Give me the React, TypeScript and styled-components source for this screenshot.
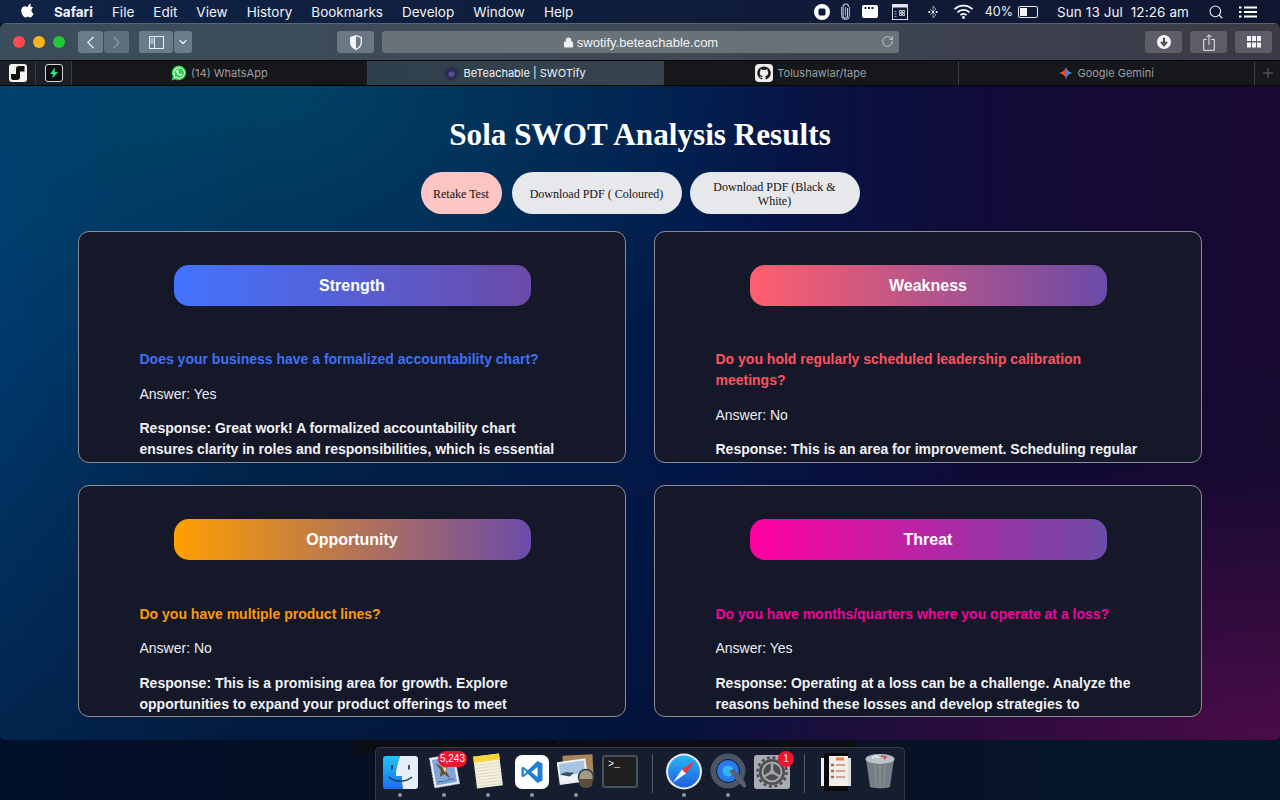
import React from "react";
import styled, { createGlobalStyle } from "styled-components";
import { Search, Lock, RotateCw, Plus, ChevronLeft, ChevronRight, ChevronDown } from "lucide-react";

const GlobalStyle = createGlobalStyle`
  html, body { margin: 0; padding: 0; height: 100%; background: #050d20; overflow: hidden; }
  * { box-sizing: border-box; }
`;

const cards = [
  {
    title: "Strength", from: "#4274ff", color: "#4070f4",
    question: "Does your business have a formalized accountability chart?",
    answer: "Answer: Yes",
    response: "Response: Great work! A formalized accountability chart ensures clarity in roles and responsibilities, which is essential for sustainable growth.",
  },
  {
    title: "Weakness", from: "#ff5f6d", color: "#ff5260",
    question: "Do you hold regularly scheduled leadership calibration meetings?",
    answer: "Answer: No",
    response: "Response: This is an area for improvement. Scheduling regular calibration meetings keeps your team aligned.",
  },
  {
    title: "Opportunity", from: "#ff9f00", color: "#fb9a05",
    question: "Do you have multiple product lines?",
    answer: "Answer: No",
    response: "Response: This is a promising area for growth. Explore opportunities to expand your product offerings to meet customer needs.",
  },
  {
    title: "Threat", from: "#ff00a0", color: "#f0049a",
    question: "Do you have months/quarters where you operate at a loss?",
    answer: "Answer: Yes",
    response: "Response: Operating at a loss can be a challenge. Analyze the reasons behind these losses and develop strategies to overcome them.",
  },
];

const App = () => {
  return (
    <Desktop>
      <GlobalStyle />
      <MenuBar>
        <MenuLeft>
          <AppleIcon viewBox="0 0 170 170">
            <path fill="#fff" d="M150 130c-2.700 6.300-5.900 12-9.600 17.200-5 7.200-9.200 12.100-12.300 14.900-4.900 4.500-10.200 6.800-15.800 7-4 0-8.900-1.200-14.500-3.500-5.700-2.300-10.900-3.400-15.700-3.400-5 0-10.400 1.100-16.100 3.400-5.800 2.300-10.400 3.600-14 3.700-5.400 0.200-10.800-2.100-16.200-7.100-3.400-3-7.700-8.100-12.800-15.400C16.500 138.500 12 129.500 8.500 119.300 4.700 108.300 2.800 97.600 2.800 87.300c0-11.800 2.500-22 7.600-30.500 4-6.800 9.400-12.200 16-16.200 6.700-4 13.900-6 21.600-6.100 4.300 0 9.900 1.300 16.800 3.900 6.900 2.600 11.400 3.900 13.300 3.900 1.500 0 6.400-1.500 14.800-4.600 7.900-2.800 14.600-4 20.100-3.600 14.900 1.200 26 7.100 33.400 17.600-13.300 8.100-19.900 19.400-19.800 33.900 0.100 11.300 4.200 20.700 12.300 28.100 3.700 3.500 7.800 6.200 12.400 8.100-1 2.900-2 5.700-3.300 8.500zM119.100 7.200c0 8.900-3.200 17.100-9.700 24.800-7.800 9.100-17.200 14.300-27.400 13.500-0.100-1.100-0.200-2.200-0.200-3.400 0-8.500 3.700-17.500 10.300-25 3.300-3.800 7.500-6.900 12.600-9.400 5-2.500 9.800-3.800 14.300-4.100 0.100 1.200 0.100 2.400 0.100 3.600z" />
          </AppleIcon>
          <MenuItem $bold>Safari</MenuItem>
          <MenuItem>File</MenuItem>
          <MenuItem>Edit</MenuItem>
          <MenuItem>View</MenuItem>
          <MenuItem>History</MenuItem>
          <MenuItem>Bookmarks</MenuItem>
          <MenuItem>Develop</MenuItem>
          <MenuItem>Window</MenuItem>
          <MenuItem>Help</MenuItem>
        </MenuLeft>
        <MenuRight>
          <StatusIcon width="16" height="16" viewBox="0 0 16 16">
            <circle cx="8" cy="8" r="8" fill="#fff" />
            <rect x="4.500" y="4.500" width="7" height="7" rx="1.500" fill="#0d1a33" />
          </StatusIcon>
          <StatusIcon $ml={11} width="9" height="17" viewBox="0 0 9 17">
            <path d="M6.500 4.500v8a2.200 2.200 0 0 1-4.400 0V3.300a2.700 2.700 0 0 1 5.400 0" transform="translate(0 .4)" fill="none" stroke="#c9ced6" strokeWidth="1.100" />
            <path d="M4.400 4v8.500" stroke="#c9ced6" strokeWidth="0.900" />
            <path d="M.6 4v8.800a3.900 3.900 0 0 0 7.800 0V4" fill="none" stroke="#c9ced6" strokeWidth="0.900" />
          </StatusIcon>
          <StatusIcon $ml={12} width="16" height="13" viewBox="0 0 16 13">
            <rect width="16" height="13" rx="2" fill="#fff" />
            <rect x="2.500" y="2" width="2" height="2" fill="#0d1a33" />
            <rect x="6" y="2" width="2" height="2" fill="#0d1a33" />
            <rect x="9.500" y="2" width="2" height="2" fill="#0d1a33" />
          </StatusIcon>
          <StatusIcon $ml={14} width="16" height="16" viewBox="0 0 16 16">
            <rect x="0.500" y="0.500" width="15" height="15" fill="none" stroke="#d8dbe2" />
            <rect x="0.500" y="0.500" width="15" height="3" fill="#e8eaf0" />
            <path d="M7.500 6.500h2v2h-2zM10.500 6.500h2v2h-2zM7.500 9.500h2v2h-2zM10.500 9.500h2v2h-2z" fill="none" stroke="#e8eaf0" strokeWidth="0.800" />
            <path d="M2.500 7.500h2M2.500 10h2M2.500 12.500h2" stroke="#c8ccd4" strokeWidth="0.800" />
          </StatusIcon>
          <StatusIcon $ml={17} width="16" height="16" viewBox="0 0 16 16">
            <path d="M5 5l6 6-3 3V2l3 3-6 6" fill="none" stroke="#8f97a4" strokeWidth="1" />
            <circle cx="4.300" cy="8" r="1.100" fill="#fff" />
            <circle cx="8" cy="8" r="1.100" fill="#fff" />
            <circle cx="11.700" cy="8" r="1.100" fill="#fff" />
          </StatusIcon>
          <StatusIcon $ml={12} width="21" height="15" viewBox="0 0 20 15">
            <path d="M1 5.200a13 13 0 0 1 18 0" fill="none" stroke="#fff" strokeWidth="1.800" />
            <path d="M4 8.300a8.600 8.600 0 0 1 12 0" fill="none" stroke="#fff" strokeWidth="1.800" />
            <path d="M7 11.200a4.200 4.200 0 0 1 6 0" fill="none" stroke="#fff" strokeWidth="1.800" />
            <circle cx="10" cy="13.500" r="1.400" fill="#fff" />
          </StatusIcon>
          <StatusText>40%</StatusText>
          <Battery>
            <BatteryFill />
          </Battery>
          <Clock>Sun 13 Jul&nbsp; 12:26 am</Clock>
          <SearchSlot>
            <Search size={16} color="#eef0f4" strokeWidth={1.6} />
          </SearchSlot>
          <StatusIcon $ml={15} width="18" height="12" viewBox="0 0 18 12">
            <path d="M5 1.500h13M5 6h13M5 10.500h13" stroke="#fff" strokeWidth="1.800" />
            <path d="M0 1.500h2.500M0 6h2.500M0 10.500h2.500" stroke="#fff" strokeWidth="1.800" />
          </StatusIcon>
        </MenuRight>
      </MenuBar>

      <Browser>
        <Toolbar>
          <ToolbarLeft>
            <Lights>
              <Light $color="#ff4a50" />
              <Light $color="#fdb31c" />
              <Light $color="#1fc93a" />
            </Lights>
            <NavGroup>
              <ToolButton $w={25}><ChevronLeft size={21} color="#e6ebef" strokeWidth={1.5} /></ToolButton>
              <ToolButton $w={25} $dim><ChevronRight size={21} color="#8c9aa6" strokeWidth={1.5} /></ToolButton>
            </NavGroup>
            <SidebarGroup>
              <ToolButton $w={34}>
                <svg width="15" height="13" viewBox="0 0 15 13">
                  <rect x="0.500" y="0.500" width="14" height="12" fill="none" stroke="#e8edf0" />
                  <path d="M5.500 0.500v12M1.500 3h3M1.500 5h3M1.500 7h3" stroke="#e8edf0" fill="none" />
                </svg>
              </ToolButton>
              <ToolButton $w={18}><ChevronDown size={12} color="#e8edf0" strokeWidth={2.6} /></ToolButton>
            </SidebarGroup>
          </ToolbarLeft>
          <AddressArea>
            <ShieldButton>
              <svg width="12" height="15" viewBox="0 0 11 14">
                <path d="M5.500 0.600 10.400 2.300V6.800C10.400 10 8.200 12.300 5.500 13.400 2.800 12.300 0.600 10 0.600 6.800V2.300Z" fill="none" stroke="#f2f5f7" strokeWidth="1.200" />
                <path d="M5.500 0.600 0.600 2.300V6.800C0.600 10 2.800 12.300 5.500 13.400Z" fill="#f2f5f7" />
              </svg>
            </ShieldButton>
            <AddressBar>
              <AddressText>
                <Lock size={11} color="#eef1f3" fill="#eef1f3" strokeWidth={2.2} />
                swotify.beteachable.com
              </AddressText>
              <ReloadSlot><RotateCw size={13} color="#e0e3e6" strokeWidth={1.3} /></ReloadSlot>
            </AddressBar>
          </AddressArea>
          <ToolbarRight>
            <RightButton>
              <svg width="16" height="16" viewBox="0 0 16 16">
                <circle cx="8" cy="8" r="7" fill="#f4f5f7" />
                <path d="M8 3.800v5.200M5 7.800l3 3.400 3-3.400" stroke="#45454f" strokeWidth="2" fill="none" />
              </svg>
            </RightButton>
            <RightButton>
              <svg width="12" height="17" viewBox="0 0 12 17">
                <path d="M3.500 5.500H.7v10.800h10.600V5.500H8.500M6 11V1M3.500 3.300 6 .8l2.500 2.500" fill="none" stroke="#eceef1" strokeWidth="1" />
              </svg>
            </RightButton>
            <RightButton>
              <svg width="14" height="12" viewBox="0 0 14 12">
                <path d="M0 0h4v5H0zM5 0h4v5H5zM10 0h4v5h-4zM0 6.500h4v5H0zM5 6.500h4v5H5zM10 6.500h4v5h-4z" fill="#f2f3f5" />
              </svg>
            </RightButton>
          </ToolbarRight>
        </Toolbar>

        <TabBar>
          <PinnedTab>
            <PinnedBox $bg="#f3f3f3">
              <svg width="16" height="16" viewBox="0 0 16 16">
                <path d="M1 9h5V4a3 3 0 0 1 3-3h5.500v5.500H10V12a3 3 0 0 1-3 3H3.500A2.500 2.500 0 0 1 1 12.500Z" fill="#111" />
              </svg>
            </PinnedBox>
          </PinnedTab>
          <PinnedTab>
            <PinnedBox $bg="#0a0d10" $border>
              <svg width="10" height="12" viewBox="0 0 10 12">
                <path d="M6 .5 1 7h3l-.8 4.500L9 5H5.800Z" fill="#2be38a" />
              </svg>
            </PinnedBox>
          </PinnedTab>
          <Tab>
            <svg width="16" height="16" viewBox="0 0 16 16">
              <path d="M8 .6a7.300 7.300 0 0 0-6.300 11L.6 15.400l3.900-1A7.300 7.300 0 1 0 8 .6Z" fill="#29d24a" />
              <path d="M8 2.200a5.700 5.700 0 0 0-4.800 8.800l-.6 2.300 2.400-.6A5.700 5.700 0 1 0 8 2.200Z" fill="#fff" />
              <path d="M8 3.200a4.800 4.800 0 0 0-4 7.400l-.4 1.600 1.700-.4A4.800 4.800 0 1 0 8 3.200Z" fill="#29d24a" />
              <path d="M6.200 5c-.3 0-.9.400-.9 1.400 0 1.700 2.400 4.300 4.500 4.300.9 0 1.400-.6 1.400-1.100l-.1-.5-1.300-.6-.6.700c-.8-.2-1.800-1.200-2.100-2l.5-.6-.5-1.400Z" fill="#fff" />
            </svg>
            <TabLabel>(14) WhatsApp</TabLabel>
          </Tab>
          <Tab $active>
            <svg width="15" height="15" viewBox="0 0 14 14">
              <circle cx="7" cy="7" r="6.500" fill="#2d2c52" />
              <path d="M4 7.500c0-3 6-3.500 6 0 0 2-2 2.500-3 2.500-2 0-3-1-3-2.500Z" fill="#57509a" />
            </svg>
            <TabLabel $active>BeTeachable | SWOTify</TabLabel>
          </Tab>
          <Tab>
            <svg width="18" height="18" viewBox="0 0 18 18">
              <rect width="18" height="18" rx="4" fill="#eeeeee" />
              <path d="M9 2.500a6.600 6.600 0 0 0-2.100 12.900c.3 0 .5-.1.5-.3v-1.200c-1.800.4-2.200-.8-2.200-.8-.3-.8-.7-1-.7-1-.6-.4 0-.4 0-.4.700 0 1 .7 1 .7.600 1 1.500.7 1.900.5 0-.4.200-.7.400-.9-1.500-.2-3-.7-3-3.200 0-.7.300-1.300.7-1.800-.1-.2-.3-.8 0-1.700 0 0 .6-.2 1.800.7a6 6 0 0 1 3.300 0c1.200-.9 1.800-.7 1.800-.7.300.9.100 1.500.1 1.700.4.500.7 1.100.7 1.800 0 2.500-1.500 3-3 3.200.2.200.4.600.4 1.200v1.900c0 .2.200.4.500.3A6.600 6.600 0 0 0 9 2.500Z" fill="#1a1a1a" />
            </svg>
            <TabLabel>Tolushawlar/tape</TabLabel>
          </Tab>
          <Tab>
            <svg width="14" height="14" viewBox="0 0 12 12">
              <path d="M6 0C6.400 3.400 8.600 5.600 12 6 8.600 6.400 6.400 8.600 6 12 5.600 8.600 3.400 6.400 0 6 3.400 5.600 5.600 3.400 6 0Z" fill="url(#gem)" />
              <defs>
                <linearGradient id="gem" x1="0" y1="0.500" x2="1" y2="0.500">
                  <stop offset="0" stopColor="#f4a91f" />
                  <stop offset="0.400" stopColor="#e8432f" />
                  <stop offset="0.600" stopColor="#3f7df5" />
                  <stop offset="1" stopColor="#2fc46b" />
                </linearGradient>
              </defs>
            </svg>
            <TabLabel>Google Gemini</TabLabel>
          </Tab>
          <NewTab><Plus size={16} color="#777" strokeWidth={1.2} /></NewTab>
        </TabBar>

        <Page>
          <Title>Sola SWOT Analysis Results</Title>
          <Actions>
            <ActionButton $w={81} $bg="#fec5c5">Retake Test</ActionButton>
            <ActionButton $w={170}>Download PDF ( Coloured)</ActionButton>
            <ActionButton $w={170}>Download PDF (Black &amp; White)</ActionButton>
          </Actions>
          <CardGrid>
            {cards.map((c) => (
              <Card key={c.title}>
                <Pill $from={c.from}>{c.title}</Pill>
                <CardBody>
                  <Question $color={c.color}>{c.question}</Question>
                  <Answer>{c.answer}</Answer>
                  <Response>{c.response}</Response>
                </CardBody>
              </Card>
            ))}
          </CardGrid>
        </Page>
      </Browser>

      <ShadowStrip />

      <Dock>
        <DockApp>
          <Finder>
            <svg width="35" height="33" viewBox="0 0 35 33">
              <path d="M17 0C15 7 12.500 13 13 20h6c0 4 0 9 1 13H0V0Z" fill="url(#finderBlue)" />
              <path d="M17 0h18v33H20c-1-4-1-9-1-13h-6C12.500 13 15 7 17 0Z" fill="#e4eff8" />
              <path d="M9 9v4.500M26 9v4.500" stroke="#1b2a44" strokeWidth="1.600" />
              <path d="M6 21c6 5.500 17 5.500 23 0" stroke="#1b2a44" strokeWidth="1.200" fill="none" />
              <defs>
                <linearGradient id="finderBlue" x1="0" y1="0" x2="0" y2="1">
                  <stop offset="0" stopColor="#1ec7f5" />
                  <stop offset="1" stopColor="#1a6ef2" />
                </linearGradient>
              </defs>
            </svg>
          </Finder>
          <RunningDot />
        </DockApp>
        <DockApp>
          <svg width="34" height="36" viewBox="0 0 34 36">
            <g transform="rotate(-10 17 18)">
              <rect x="5" y="3" width="25" height="30" fill="#eef1f6" stroke="#d5dae2" strokeDasharray="2 1" />
              <rect x="7" y="5" width="21" height="26" fill="#7ea6d8" />
              <path d="M10 9l6 5 6-1-3 5 3 9-5-6-5 2 2-6Z" fill="#6c4a2a" />
              <path d="M16 14l4 1-2 5Z" fill="#e8dcc8" />
              <path d="M9 28c3-1 5 1 8 0s6-1 9 0" stroke="#3f70b8" fill="none" />
            </g>
          </svg>
          <Badge $w={27} $right={-1}>5,243</Badge>
          <RunningDot />
        </DockApp>
        <DockApp>
          <svg width="32" height="36" viewBox="0 0 32 36">
            <g transform="rotate(-7 16 18)">
              <rect x="3" y="2" width="26" height="32" fill="#f5f1dd" />
              <rect x="3" y="2" width="26" height="6" fill="#f8d33a" />
              <path d="M3 11h26M3 14h26M3 17h26M3 20h26M3 23h26M3 26h26M3 29h26M3 32h26" stroke="#d5d0bd" strokeWidth="0.700" />
            </g>
          </svg>
          <RunningDot />
        </DockApp>
        <DockApp>
          <VsCodeTile>
            <svg width="24" height="24" viewBox="0 0 24 24">
              <path d="M17.500 1 7.800 10.200 3.300 6.800 1.500 7.700v8.600l1.800.9 4.500-3.400L17.500 23l5-2.400V3.400ZM17.500 7v10l-6.200-5Z" fill="#1f7fd4" />
              <path d="M3.800 9.200 6.400 12l-2.600 2.800Z" fill="#fff" />
            </svg>
          </VsCodeTile>
          <RunningDot />
        </DockApp>
        <DockApp>
          <svg width="38" height="36" viewBox="0 0 38 36">
            <rect x="6" y="2" width="30" height="23" fill="#a8855a" transform="rotate(-3 20 13)" />
            <g transform="rotate(-8 16 18)">
              <rect x="1" y="7" width="29" height="23" fill="#eef0f2" />
              <rect x="3" y="9" width="25" height="19" fill="#a7c4e4" />
              <path d="M3 21c6-3 12 1 25 1v6H3Z" fill="#f0f2f6" />
              <path d="M3 20c5-3 9-1 14 0l-5 3Z" fill="#394e6c" />
            </g>
            <circle cx="29" cy="24" r="7.500" fill="#a09a8a" stroke="#3a3a3a" strokeWidth="1.500" />
            <path d="M22.500 26h13v6c-3 4-10 4-13 0Z" fill="#5a4e3e" />
          </svg>
          <RunningDot />
        </DockApp>
        <DockApp>
          <Terminal>&gt;_</Terminal>
        </DockApp>
        <DockDivider />
        <DockApp>
          <svg width="36" height="37" viewBox="0 0 35 36">
            <circle cx="17.500" cy="18" r="17.500" fill="#e7ecf2" />
            <circle cx="17.500" cy="18" r="15.500" fill="url(#safariBlue)" />
            <path d="M28 7.500 19.500 20 15.500 16Z" fill="#f3343a" />
            <path d="M7 28.500 15.500 16 19.500 20Z" fill="#f4f6f8" />
            <defs>
              <linearGradient id="safariBlue" x1="0" y1="0" x2="0" y2="1">
                <stop offset="0" stopColor="#28b4f5" />
                <stop offset="1" stopColor="#1f5fe0" />
              </linearGradient>
            </defs>
          </svg>
          <RunningDot />
        </DockApp>
        <DockApp>
          <svg width="36" height="38" viewBox="0 0 36 38">
            <circle cx="18" cy="18" r="17.500" fill="#4a5568" />
            <circle cx="18" cy="18" r="11.500" fill="#2a78ea" stroke="#11151d" strokeWidth="1" />
            <circle cx="18" cy="18" r="5.500" fill="#2fb7f6" />
            <path d="M19 18l14 16c1 1.500 3 .5 3-1l-1-4-11-13Z" fill="#58616d" />
          </svg>
          <RunningDot />
        </DockApp>
        <DockApp>
          <GearTile>
            <svg width="32" height="32" viewBox="0 0 32 32">
              <circle cx="16" cy="16" r="13" fill="#4b4d50" />
              <circle cx="16" cy="16" r="14.500" fill="none" stroke="#4b4d50" strokeWidth="2.500" strokeDasharray="3 2.700" />
              <circle cx="16" cy="16" r="9.500" fill="none" stroke="#a2a4a7" strokeWidth="2" />
              <path d="M16 16V7M16 16l8 4.500M16 16l-8 4.500" stroke="#a2a4a7" strokeWidth="2.400" />
              <circle cx="16" cy="16" r="2.500" fill="#a2a4a7" />
            </svg>
          </GearTile>
          <Badge $w={16} $right={0}>1</Badge>
        </DockApp>
        <DockDivider />
        <DockApp>
          <svg width="30" height="38" viewBox="0 0 30 38">
            <rect x="0" y="5" width="4" height="28" fill="#f0f0f0" />
            <rect x="26" y="5" width="4" height="28" fill="#e0e0e0" />
            <rect x="3" y="0" width="24" height="38" rx="1" fill="#0a0a0c" />
            <rect x="8" y="3" width="19" height="30" fill="#f0ece8" />
            <path d="M15 6h8" stroke="#ef7a4a" strokeWidth="3" />
            <path d="M10 12h3M10 18h3M10 24h3" stroke="#a06a4a" strokeWidth="2.500" />
            <path d="M15 12h9M15 18h9M15 24h9" stroke="#c58e76" strokeWidth="1.500" />
          </svg>
        </DockApp>
        <DockApp>
          <svg width="30" height="37" viewBox="0 0 30 37">
            <path d="M1 6 5 33.500c.3 2.500 19.700 2.500 20 0L29 6Z" fill="#767d84" />
            <ellipse cx="15" cy="6" rx="14.500" ry="5" fill="#b9c0c6" />
            <path d="M7 5l4-2 3 2" stroke="#e8eaec" strokeWidth="1.800" fill="none" />
            <path d="M16 3l5 1-2 2" stroke="#d04a4a" strokeWidth="1.500" fill="none" />
            <path d="M10 12l1.500 22M15 12v22M20 12l-1.500 22" stroke="#8e969c" strokeWidth="1" />
          </svg>
        </DockApp>
      </Dock>
    </Desktop>
  );
};

export default App;

const Desktop = styled.div`
  position: relative;
  width: 1280px;
  height: 800px;
  overflow: hidden;
  display: flex;
  flex-direction: column;
  background: linear-gradient(90deg, #03102a 0%, #071022 50%, #06172a 100%);
  font-family: "Liberation Sans", Arial, sans-serif;
`;

const MenuBar = styled.div`
  height: 23px;
  flex: none;
  display: flex;
  justify-content: space-between;
  align-items: center;
  padding: 0 23px 0 21px;
  background: linear-gradient(90deg, #0f2347 0%, #0f1d3b 50%, #101630 100%);
  color: #eef0f4;
`;

const MenuLeft = styled.div`
  display: flex;
  align-items: center;
  gap: 19px;
`;

const AppleIcon = styled.svg`
  width: 14px;
  height: 15px;
  margin: -2px 0 0 0;
`;

const MenuItem = styled.span<{ $bold?: boolean }>`
  font-family: "Inter", "Liberation Sans", sans-serif;
  font-size: 13.5px;
  font-weight: ${(p) => (p.$bold ? 700 : 400)};
  color: #f1f3f6;
`;

const MenuRight = styled.div`
  display: flex;
  align-items: center;
`;

const StatusIcon = styled.svg<{ $ml?: number }>`
  display: block;
  flex: none;
  margin-left: ${(p) => p.$ml ?? 0}px;
`;

const StatusText = styled.span`
  font-family: "Inter", "Liberation Sans", sans-serif;
  font-size: 12.5px;
  color: #f1f3f6;
  margin-left: 11px;
`;

const Battery = styled.div`
  width: 20px;
  height: 12px;
  margin-left: 5px;
  border: 1px solid #e6e8ec;
  border-radius: 2px;
  padding: 1px;
`;

const BatteryFill = styled.div`
  width: 7px;
  height: 100%;
  background: #f3f4f6;
`;

const Clock = styled.span`
  font-family: "Inter", "Liberation Sans", sans-serif;
  font-size: 13.5px;
  letter-spacing: 0.1px;
  color: #f1f3f6;
  margin-left: 19px;
`;

const SearchSlot = styled.span`
  display: flex;
  margin-left: 19px;
`;

const Browser = styled.div`
  height: 717px;
  flex: none;
  display: flex;
  flex-direction: column;
  border-radius: 6px;
  overflow: hidden;
`;

const Toolbar = styled.div`
  height: 37px;
  flex: none;
  display: flex;
  align-items: center;
  padding: 0 8px 0 13px;
  background: linear-gradient(90deg, #3a4d5b 0%, #3f4a57 45%, #3a3a46 100%);
  border-top: 1px solid #5a6470;
`;

const ToolbarLeft = styled.div`
  display: flex;
  align-items: center;
  width: 324px;
`;

const Lights = styled.div`
  display: flex;
  gap: 8px;
  margin-right: 13px;
`;

const Light = styled.span<{ $color: string }>`
  width: 12px;
  height: 12px;
  border-radius: 50%;
  background: ${(p) => p.$color};
`;

const NavGroup = styled.div`
  display: flex;
  gap: 1px;
  margin-right: 10px;
`;

const SidebarGroup = styled.div`
  display: flex;
  gap: 1px;
`;

const ToolButton = styled.div<{ $w: number; $dim?: boolean }>`
  width: ${(p) => p.$w}px;
  height: 22px;
  display: flex;
  align-items: center;
  justify-content: center;
  background: ${(p) => (p.$dim ? "#5d6f7e" : "#6a7c8b")};
  border-radius: 3px;
`;

const AddressArea = styled.div`
  display: flex;
  align-items: center;
  gap: 8px;
`;

const ShieldButton = styled.div`
  width: 37px;
  height: 22px;
  display: flex;
  align-items: center;
  justify-content: center;
  background: #6b7883;
  border-radius: 3px;
`;

const AddressBar = styled.div`
  width: 517px;
  height: 22px;
  position: relative;
  display: flex;
  align-items: center;
  justify-content: center;
  background: #6a7279;
  border-radius: 3px;
`;

const AddressText = styled.div`
  display: flex;
  align-items: center;
  gap: 3px;
  font-size: 13px;
  color: #f2f4f5;
`;

const ReloadSlot = styled.div`
  position: absolute;
  right: 5px;
  top: 4px;
  display: flex;
`;

const ToolbarRight = styled.div`
  margin-left: auto;
  display: flex;
  gap: 8px;
`;

const RightButton = styled.div`
  width: 37px;
  height: 22px;
  display: flex;
  align-items: center;
  justify-content: center;
  background: #5d5c68;
  border-radius: 3px;
`;

const TabBar = styled.div`
  height: 26px;
  flex: none;
  display: flex;
  align-items: stretch;
  background: #17181d;
  border-top: 1px solid #050506;
  border-bottom: 1px solid #050506;
`;

const PinnedTab = styled.div`
  width: 36px;
  flex: none;
  display: flex;
  align-items: center;
  justify-content: center;
  border-right: 1px solid #3a3d44;
  background: #1a2026;
`;

const PinnedBox = styled.div<{ $bg: string; $border?: boolean }>`
  width: 18px;
  height: 18px;
  display: flex;
  align-items: center;
  justify-content: center;
  border-radius: 3px;
  background: ${(p) => p.$bg};
  border: ${(p) => (p.$border ? "1px solid #d5d8da" : "none")};
`;

const Tab = styled.div<{ $active?: boolean }>`
  flex: 1;
  display: flex;
  align-items: center;
  justify-content: center;
  gap: 4px;
  background: ${(p) => (p.$active ? "linear-gradient(90deg, #2e3f4c, #38434f)" : "#15171b")};
  border-right: 1px solid #3a3d44;
`;

const TabLabel = styled.span<{ $active?: boolean }>`
  font-family: "Inter", "Liberation Sans", sans-serif;
  font-size: 11px;
  color: ${(p) => (p.$active ? "#f0f2f3" : "#9b9ea2")};
`;

const NewTab = styled.div`
  width: 25px;
  flex: none;
  display: flex;
  align-items: center;
  justify-content: center;
`;

const Page = styled.div`
  flex: 1;
  min-height: 0;
  display: flex;
  flex-direction: column;
  align-items: center;
  background: radial-gradient(ellipse 520px 320px at 22% 0%, rgba(0, 90, 120, 0.55), transparent 100%),
    radial-gradient(ellipse 620px 280px at 100% 100%, rgba(90, 12, 80, 0.8), transparent 100%),
    linear-gradient(180deg, rgba(0, 0, 0, 0) 40%, rgba(6, 12, 40, 0.45) 100%),
    linear-gradient(90deg, #00396c 0%, #01264f 20%, #02184a 55%, #120a38 78%, #190a30 100%);
  overflow: hidden;
`;

const Title = styled.h1`
  margin: 30px 0 0;
  font-family: "Liberation Serif", "Times New Roman", serif;
  font-size: 31.2px;
  line-height: 38px;
  font-weight: 700;
  color: #fff;
`;

const Actions = styled.div`
  display: flex;
  gap: 8px;
  margin-top: 18px;
`;

const ActionButton = styled.button<{ $w: number; $bg?: string }>`
  width: ${(p) => p.$w}px;
  height: 42px;
  padding: 1px 10px 0;
  border: none;
  border-radius: 21px;
  background: ${(p) => p.$bg ?? "#e7e8ec"};
  color: #111;
  font-family: "Liberation Serif", "Times New Roman", serif;
  font-size: 12px;
  line-height: 14px;

  &:first-child {
    margin-right: 2px;
  }
`;

const CardGrid = styled.div`
  display: grid;
  grid-template-columns: 548px 548px;
  grid-auto-rows: 232px;
  column-gap: 28px;
  row-gap: 22.6px;
  margin-top: 16.6px;
`;

const Card = styled.div`
  display: flex;
  flex-direction: column;
  align-items: center;
  overflow: hidden;
  padding-top: 33px;
  background: #141829;
  border: 1px solid #8b8d90;
  border-radius: 11px;
`;

const Pill = styled.div<{ $from: string }>`
  width: 357px;
  height: 41px;
  flex: none;
  display: flex;
  align-items: center;
  justify-content: center;
  padding-top: 1px;
  border-radius: 15px;
  background: linear-gradient(90deg, ${(p) => p.$from} 0%, #6b4ba8 100%);
  color: #fff;
  font-size: 16px;
  font-weight: 700;
`;

const CardBody = styled.div`
  width: 424px;
  margin: 43.4px 1px 0 0;
  font-size: 14px;
  line-height: 21px;
`;

const Question = styled.div<{ $color: string }>`
  font-weight: 700;
  color: ${(p) => p.$color};
`;

const Answer = styled.div`
  margin-top: 13.6px;
  color: #eceef2;
`;

const Response = styled.div`
  margin-top: 13.6px;
  font-weight: 700;
  color: #f1f2f5;
`;

const ShadowStrip = styled.div`
  position: absolute;
  left: 354px;
  top: 740px;
  width: 501px;
  height: 14px;
  background: linear-gradient(90deg, #0c0e13 0 199px, #000 199px 200px, #0c0e13 200px);
  border-radius: 0 0 4px 4px;
`;

const Dock = styled.div`
  position: absolute;
  left: 375px;
  top: 747px;
  width: 530px;
  height: 53px;
  display: flex;
  align-items: flex-start;
  padding: 5px 2px 0 2px;
  background: #151d2e;
  border: 1px solid #323a48;
  border-bottom: none;
  border-radius: 5px 5px 0 0;
`;

const DockApp = styled.div`
  position: relative;
  width: 44px;
  height: 47px;
  flex: none;
  display: flex;
  justify-content: center;
  align-items: flex-start;
`;

const RunningDot = styled.span`
  position: absolute;
  left: 20px;
  bottom: 3px;
  width: 4px;
  height: 4px;
  border-radius: 50%;
  background: #8e95a0;
`;

const Badge = styled.span<{ $w: number; $right: number }>`
  position: absolute;
  top: -2px;
  right: ${(p) => p.$right}px;
  min-width: ${(p) => p.$w}px;
  height: 16px;
  padding: 0 2px;
  border-radius: 8px;
  background: #f0142e;
  color: #fff;
  font-size: 10px;
  line-height: 16px;
  text-align: center;
`;

const Finder = styled.div`
  width: 35px;
  height: 33px;
  margin-top: 3px;
  border-radius: 3px;
  overflow: hidden;
  display: flex;
`;

const VsCodeTile = styled.div`
  width: 34px;
  height: 34px;
  margin-top: 2px;
  display: flex;
  align-items: center;
  justify-content: center;
  background: #fff;
  border-radius: 7px;
`;

const GearTile = styled.div`
  width: 36px;
  height: 34px;
  margin-top: 2px;
  display: flex;
  align-items: center;
  justify-content: center;
  background: #a9acb0;
  border-radius: 3px;
`;

const Terminal = styled.div`
  width: 36px;
  height: 33px;
  margin-top: 2px;
  padding: 2px 4px;
  background: #1f1f1f;
  border: 2px solid #48505a;
  border-radius: 3px;
  color: #f3f3f3;
  font-family: "Liberation Mono", monospace;
  font-size: 10px;
  line-height: 11px;
`;

const DockDivider = styled.div`
  width: 1px;
  height: 39px;
  flex: none;
  margin: 1px 9px 0 10px;
  background: #535a66;
`;
